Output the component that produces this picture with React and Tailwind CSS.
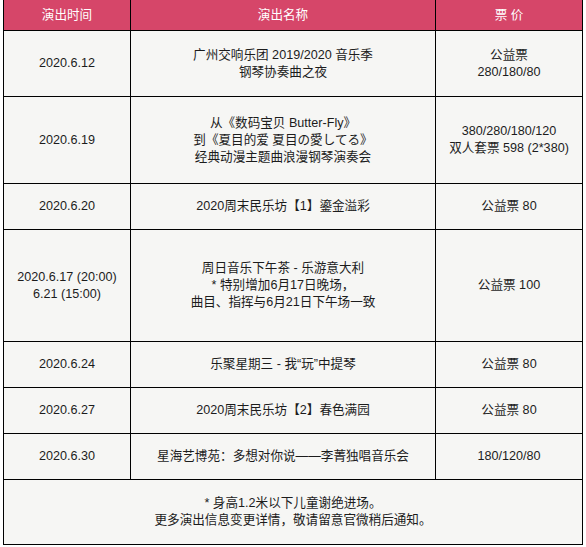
import React from "react";

const rows = [
  { h: "h-[66px]", date: ["2020.6.12"], name: ["广州交响乐团 2019/2020 音乐季", "钢琴协奏曲之夜"], price: ["公益票", "280/180/80"] },
  {
    h: "h-[87px]",
    date: ["2020.6.19"],
    name: ["从《数码宝贝 Butter-Fly》", "到《夏目的爱 夏目の愛してる》", "经典动漫主题曲浪漫钢琴演奏会"],
    price: ["380/280/180/120", "双人套票 598 (2*380)"],
  },
  { h: "h-[46px]", date: ["2020.6.20"], name: ["2020周末民乐坊【1】鎏金溢彩"], price: ["公益票 80"] },
  {
    h: "h-[112px]",
    date: ["2020.6.17 (20:00)", "6.21 (15:00)"],
    name: ["周日音乐下午茶 - 乐游意大利", "* 特别增加6月17日晚场，", "曲目、指挥与6月21日下午场一致"],
    price: ["公益票 100"],
  },
  { h: "h-[46px]", date: ["2020.6.24"], name: ["乐聚星期三 - 我“玩”中提琴"], price: ["公益票 80"] },
  { h: "h-[46px]", date: ["2020.6.27"], name: ["2020周末民乐坊【2】春色满园"], price: ["公益票 80"] },
  { h: "h-[46px]", date: ["2020.6.30"], name: ["星海艺博苑：多想对你说——李菁独唱音乐会"], price: ["180/120/80"] },
];

function Lines({ lines }) {
  return (
    <div className="flex flex-col items-center text-center">
      {lines.map((l, i) => (
        <span key={i} className="whitespace-nowrap">
          {l}
        </span>
      ))}
    </div>
  );
}

export default function App() {
  return (
    <div
      className="bg-white w-[586px] h-[547px] text-[12.6px] leading-[17px] text-[#1c1c1c]"
      style={{ fontFamily: '"Liberation Sans", "Noto Sans CJK SC", sans-serif' }}
    >
      <div className="ml-[3px] w-[580px] border-l border-r border-b border-black bg-[#f6f6f4]">
        {/* Header */}
        <div className="flex h-[31px] border-b border-black bg-[#d64669] text-white">
          <div className="w-[127px] shrink-0 border-r border-black flex items-center justify-center">演出时间</div>
          <div className="w-[305px] shrink-0 border-r border-black flex items-center justify-center">演出名称</div>
          <div className="flex-1 flex items-center justify-center">票 价</div>
        </div>

        {rows.map((r, i) => (
          <div key={i} className={`flex ${r.h} border-b border-black`}>
            <div className="w-[127px] shrink-0 border-r border-black flex items-center justify-center">
              <Lines lines={r.date} />
            </div>
            <div className="w-[305px] shrink-0 border-r border-black flex items-center justify-center">
              <Lines lines={r.name} />
            </div>
            <div className="flex-1 flex items-center justify-center">
              <Lines lines={r.price} />
            </div>
          </div>
        ))}

        {/* Footer note */}
        <div className="h-[64px] flex items-center justify-center">
          <Lines lines={["* 身高1.2米以下儿童谢绝进场。", "更多演出信息变更详情，敬请留意官微稍后通知。"]} />
        </div>
      </div>
    </div>
  );
}
